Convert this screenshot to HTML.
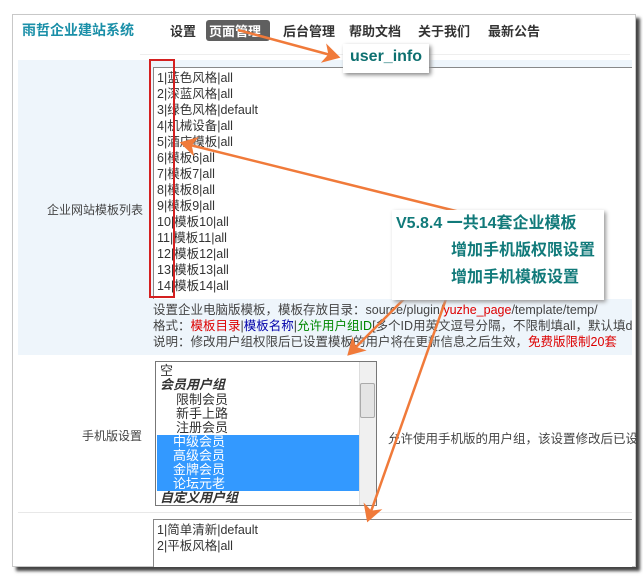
<!DOCTYPE html>
<html><head><meta charset="utf-8"><style>
*{margin:0;padding:0;box-sizing:border-box}
body{width:643px;height:582px;background:#fff;position:relative;overflow:hidden;font-family:"Liberation Sans","Noto Sans CJK SC",sans-serif;font-size:12px;color:#333}
.a{position:absolute;white-space:nowrap}
#frame{position:absolute;left:12px;top:14px;width:624px;height:553px;border:1px solid #c8c8c8;background:#fff;box-shadow:4px 4px 3px #444}
.nav{font-size:13px;font-weight:bold;color:#333;top:21px}
.ta div{height:16px;line-height:16px}
</style></head><body>
<div id="frame"></div>
<div class="a" style="left:22px;top:20px;font-size:14px;font-weight:bold;color:#1a8fa8">雨哲企业建站系统</div>
<div class="a nav" style="left:170px">设置</div>
<div class="a" style="left:206px;top:20px;width:64px;height:21px;background:#5f5f5f;border-radius:3px"></div>
<div class="a nav" style="left:209px;color:#fff">页面管理</div>
<div class="a nav" style="left:283px">后台管理</div>
<div class="a nav" style="left:349px">帮助文档</div>
<div class="a nav" style="left:418px">关于我们</div>
<div class="a nav" style="left:488px">最新公告</div>
<div class="a" style="left:140px;top:54px;width:490px;height:1px;background:#eee"></div>
<div class="a" style="left:18px;top:60px;width:614px;height:295px;background:#eef5fb"></div>
<div class="a ta" style="left:153px;top:67px;width:479px;height:232px;background:#fff;border:1px solid #888;border-right:none;border-bottom:none;padding:2px 0 0 3px;color:#333;font-size:12.5px">
<div>1|蓝色风格|all</div><div>2|深蓝风格|all</div><div>3|绿色风格|default</div><div>4|机械设备|all</div><div>5|酒店模板|all</div><div>6|模板6|all</div><div>7|模板7|all</div><div>8|模板8|all</div><div>9|模板9|all</div><div>10|模板10|all</div><div>11|模板11|all</div><div>12|模板12|all</div><div>13|模板13|all</div><div>14|模板14|all</div></div>
<div class="a" style="left:149px;top:59px;width:26px;height:239px;border:2px solid #d42020"></div>
<div class="a" style="left:47px;top:201px;color:#444">企业网站模板列表</div>
<div class="a" style="left:153px;top:302px;line-height:16px;color:#444;font-size:12.5px;width:479px;overflow:hidden">设置企业电脑版模板，模板存放目录：source/plugin/<span style="color:#d00">yuzhe_page</span>/template/temp/<br>格式：<span style="color:#d00">模板目录</span>|<span style="color:#00a">模板名称</span>|<span style="color:#080">允许用户组ID</span>[多个ID用英文逗号分隔，不限制填all，默认填de<br>说明：修改用户组权限后已设置模板的用户将在更新信息之后生效，<span style="color:#d00">免费版限制20套</span></div>
<div class="a" style="left:155px;top:361px;width:222px;height:145px;border:1px solid #777;background:#fff"></div>
<div class="a" style="left:160px;top:364px;line-height:14.3px;font-size:13px;color:#333;width:200px">
<div>空</div><div style="font-weight:bold;font-style:italic">会员用户组</div><div style="padding-left:16px">限制会员</div><div style="padding-left:16px">新手上路</div><div style="padding-left:16px">注册会员</div>
<div style="background:#3399ff;color:#fff;padding-left:16px;margin-left:-3px;width:202px;line-height:14px">中级会员<br>高级会员<br>金牌会员<br>论坛元老</div>
<div style="font-weight:bold;font-style:italic">自定义用户组</div></div>
<div class="a" style="left:359px;top:362px;width:17px;height:143px;background:#f0f0f0;border-left:1px solid #ddd"></div>
<div class="a" style="left:360px;top:383px;width:15px;height:35px;background:#e4e4e4;border:1px solid #aaa;border-radius:2px"></div>
<div class="a" style="left:82px;top:427px;color:#444">手机版设置</div>
<div class="a" style="left:388px;top:428px;color:#444;font-size:12.5px">允许使用手机版的用户组，该设置修改后已设</div>
<div class="a" style="left:18px;top:512px;width:614px;height:1px;background:#e8e8e8"></div>
<div class="a ta" style="left:153px;top:519px;width:479px;height:48px;background:#fff;border:1px solid #888;border-right:none;border-bottom:none;padding:2px 0 0 3px;font-size:12.5px">
<div>1|简单清新|default</div><div>2|平板风格|all</div></div>
<svg class="a" style="left:0;top:0" width="643" height="582">
<defs><marker id="m" markerWidth="8" markerHeight="8" refX="6" refY="4" orient="auto" markerUnits="strokeWidth"><path d="M0,0 L7,4 L0,8 L2,4Z" fill="#f07a3a"/></marker></defs>
<g stroke="#f07a3a" stroke-width="2.5" fill="none" marker-end="url(#m)">
<line x1="238" y1="30" x2="338" y2="57"/>
<line x1="468" y1="214" x2="182" y2="143"/>
<line x1="451" y1="252" x2="349" y2="354"/>
<line x1="452" y1="282" x2="368" y2="520"/>
</g></svg>
<div class="a" style="left:343px;top:44px;width:86px;height:29px;background:#fff;box-shadow:2px 2px 4px #888;font-size:16px;font-weight:bold;color:#0d7070;padding:4px 0 0 7px">user_info</div>
<div class="a" style="left:392px;top:210px;width:212px;height:90px;background:#fff;box-shadow:2px 2px 4px #999;font-size:16px;font-weight:bold;color:#117a7a;line-height:27px;padding:0 0 0 4px">V5.8.4 一共14套企业模板<br><span style="padding-left:55px">增加手机版权限设置</span><br><span style="padding-left:55px">增加手机模板设置</span></div>
</body></html>
